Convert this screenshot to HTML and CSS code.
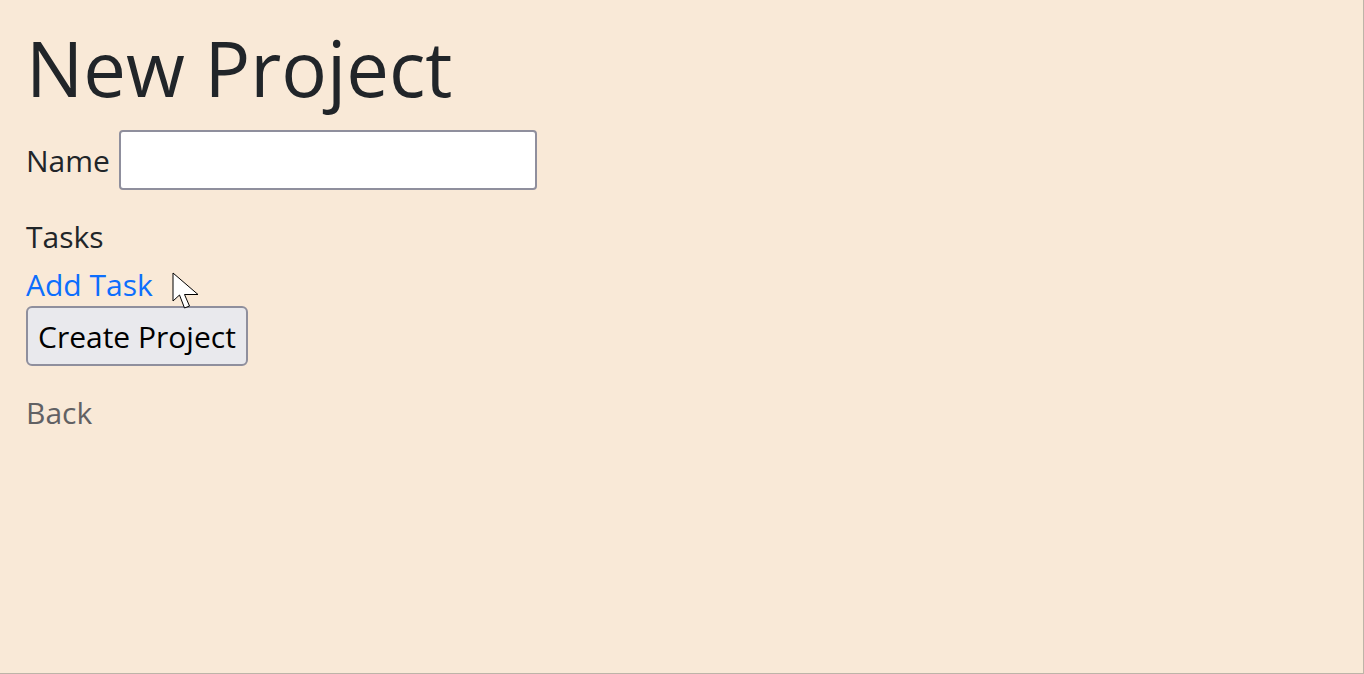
FILE: index.html
```html
<!DOCTYPE html>
<html lang="en">
<head>
<meta charset="utf-8">
<title>New Project</title>
<link rel="stylesheet" href="styles.css">
</head>
<body>
<main class="page">
  <h1 class="title">New Project</h1>
  <form class="form">
    <div class="field">
      <label class="label" for="name">Name</label>
      <input class="input" id="name" type="text">
    </div>
    <div class="tasks">
      <div class="label">Tasks</div>
      <a class="add-task" href="#">Add Task</a>
    </div>
    <button class="btn" type="button">Create Project</button>
  </form>
  <a class="back" href="#">Back</a>
</main>
<svg class="cursor" width="28" height="40" viewBox="0 0 28 40" aria-hidden="true">
  <path d="M1 1 L1 29 L7.5 23 L12.5 36 L17.5 34 L12.5 22.5 L26 22.5 Z" fill="#fff" stroke="#000" stroke-width="1" stroke-linejoin="miter"/>
</svg>
</body>
</html>
```
FILE: styles.css
```css
html, body {
  margin: 0;
  padding: 0;
  height: 100%;
}
body {
  background: #f9e9d7;
  color: #212529;
  font-family: "Open Sans", "Noto Sans", sans-serif;
  font-size: 30px;
  line-height: 45px;
  box-sizing: border-box;
  border-right: 1px solid #bdb4a8;
  border-bottom: 1px solid #bdb4a8;
  position: relative;
}
.page {
  padding: 22px 26px;
}
.title {
  margin: 0 0 17px;
  font-size: 76px;
  font-weight: 400;
  line-height: 1.2;
}
.form {
  display: flex;
  flex-direction: column;
  align-items: flex-start;
}
.field {
  display: flex;
  align-items: center;
  gap: 9px;
}
.input {
  box-sizing: border-box;
  width: 418px;
  height: 60px;
  border: 2px solid #8f8f9d;
  border-radius: 4px;
  background: #fff;
  font: inherit;
}
.tasks {
  margin-top: 24px;
  display: flex;
  flex-direction: column;
}
.add-task {
  margin-top: 3px;
  color: #0d6efd;
  text-decoration: none;
}
.btn {
  box-sizing: border-box;
  height: 60px;
  margin-top: -1px;
  padding: 0 10px;
  border: 2px solid #8f8f9d;
  border-radius: 6px;
  background: #e9e9ed;
  color: #000;
  font: inherit;
}
.back {
  display: inline-block;
  margin-top: 24px;
  color: #616164;
  text-decoration: none;
}
.cursor {
  position: absolute;
  left: 172px;
  top: 272px;
}
```
